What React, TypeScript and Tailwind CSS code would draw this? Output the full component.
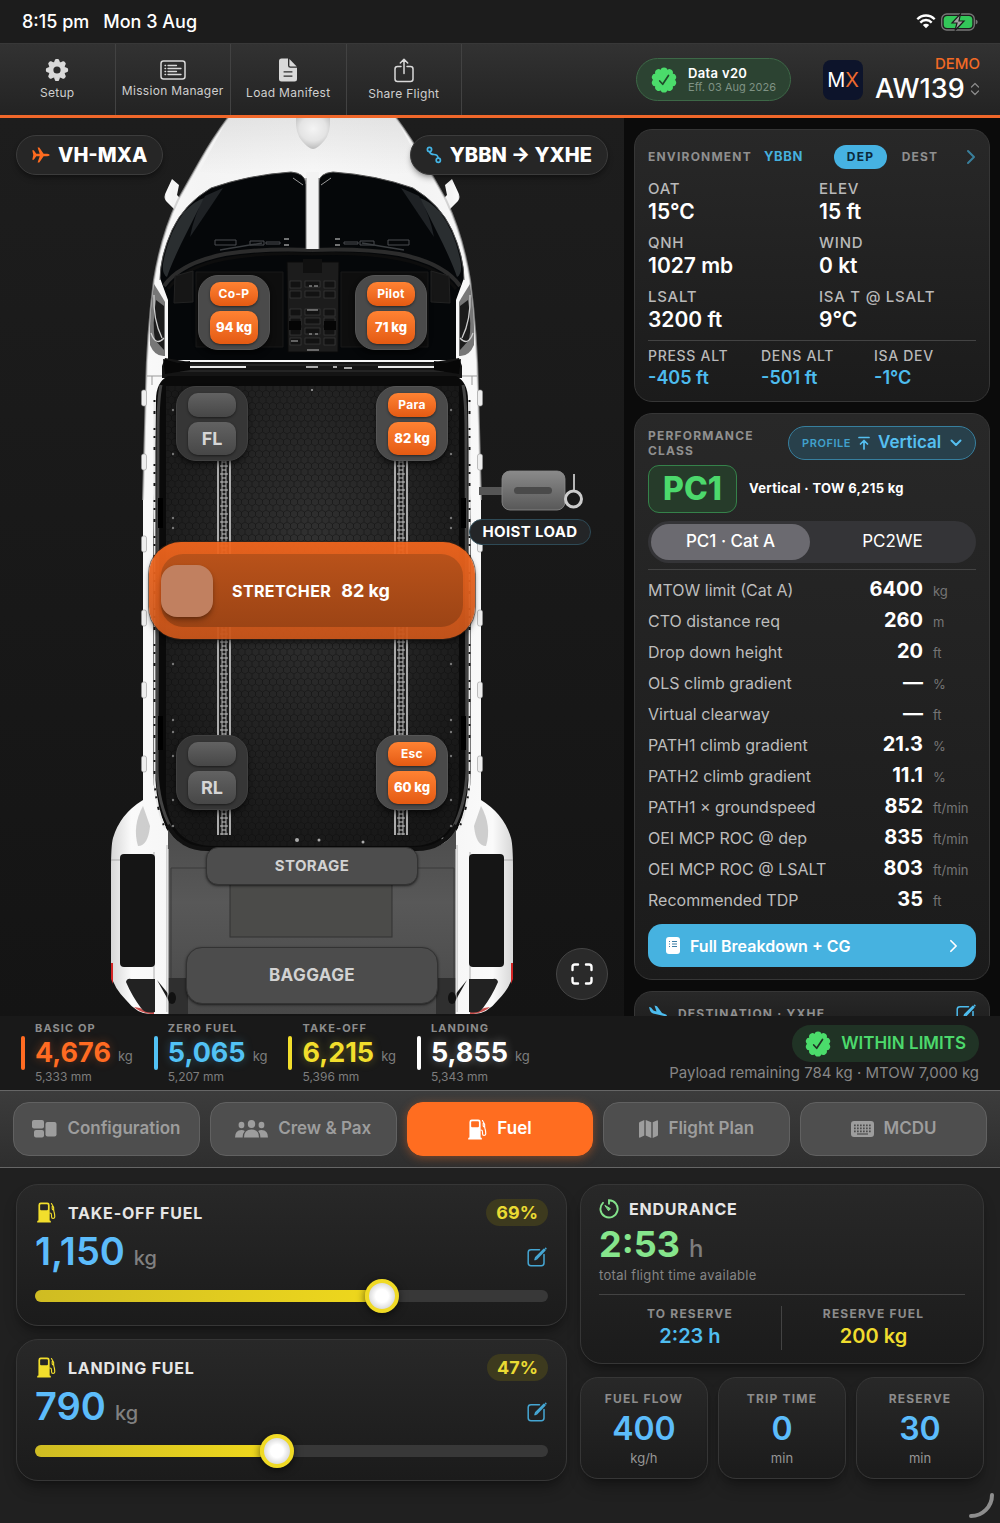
import { useState } from "react";
import type { ReactNode } from "react";

/* ---------- icons ---------- */

function GearIcon() {
  return (
    <svg viewBox="-12 -12 24 24" className="size-6" fill="#d9d9d9" aria-hidden="true">
      <path
        fillRule="evenodd"
        d="M0-8.3a8.3 8.3 0 1 1 0 16.6a8.3 8.3 0 1 1 0-16.6zM0-3.6a3.6 3.6 0 1 0 0 7.2a3.6 3.6 0 1 0 0-7.2z"
      />
      {[0, 45, 90, 135, 180, 225, 270, 315].map((a) => (
        <path key={a} transform={`rotate(${a})`} d="M-3.2-7.2L-2-10.2Q-1.7-11.1-.8-11.1H.8Q1.7-11.1 2-10.2L3.2-7.2z" />
      ))}
    </svg>
  );
}

function MissionIcon() {
  return (
    <svg viewBox="0 0 26 20" className="h-5 w-[26px]" fill="none" stroke="#d9d9d9" aria-hidden="true">
      <rect x="1" y="1" width="24" height="18" rx="2.5" strokeWidth="1.5" />
      <path d="M8 5.5h8.5M8 8.5h13M8 11.5h8.5M8 14.5h13" strokeWidth="1.3" strokeLinecap="round" />
      <path d="M5 5.5h.6M5 8.5h.6M5 11.5h.6M5 14.5h.6" strokeWidth="1.3" strokeLinecap="round" />
    </svg>
  );
}

function DocIcon() {
  return (
    <svg viewBox="0 0 18 24" className="h-6 w-[18px]" fill="#d9d9d9" aria-hidden="true">
      <path
        fillRule="evenodd"
        d="M2.5.5H9V7.5Q9 9.8 11.3 9.8H18V21Q18 23.5 15.5 23.5H2.5Q0 23.5 0 21V3Q0 .5 2.5.5zM4.6 13.3v1.3h8.8v-1.3zM4.6 17.5v1.3h8.8v-1.3z"
      />
      <path d="M10.4.9L17.7 8.4H11.6Q10.4 8.4 10.4 7.2z" />
    </svg>
  );
}

function ShareIcon() {
  return (
    <svg viewBox="0 0 20 25" className="h-[25px] w-5" fill="none" stroke="#d9d9d9" strokeWidth="1.5" strokeLinecap="round" strokeLinejoin="round" aria-hidden="true">
      <path d="M7 8.5H3.500Q1 8.500 1 11V21Q1 23.500 3.500 23.500H16.500Q19 23.500 19 21V11Q19 8.500 16.500 8.500H13M10 15.500V1.500M6.300 5L10 1.300L13.700 5" />
    </svg>
  );
}

function SealIcon({ check }: { check: string }) {
  return (
    <svg viewBox="-13 -13 26 26" className="size-[26px] shrink-0" fill="#4bdc6b" aria-hidden="true">
      <circle r="10.8" />
      {[0, 36, 72, 108, 144, 180, 216, 252, 288, 324].map((a) => (
        <circle key={a} r="3.4" cy="-9.2" transform={`rotate(${a})`} />
      ))}
      <path d="M-4.300 1L-1.300 4.300L4.500-4.500" fill="none" stroke={check} strokeWidth="1.700" strokeLinecap="round" strokeLinejoin="round" />
    </svg>
  );
}

function WifiIcon() {
  return (
    <svg viewBox="0 0 20 15" className="h-[15px] w-5" fill="none" stroke="#fff" strokeWidth="2.300" aria-hidden="true">
      <path d="M1.300 5.300Q5 1.500 10 1.500T18.700 5.300" />
      <path d="M4.300 8.600Q6.700 6 10 6T15.700 8.600" />
      <path d="M10 14.300L6.800 11.100Q8.200 9.700 10 9.700T13.200 11.100z" fill="#fff" stroke="none" />
    </svg>
  );
}

function BatteryIcon() {
  return (
    <svg viewBox="0 0 37 18" className="h-[18px] w-[37px]" aria-hidden="true">
      <rect x=".7" y="1" width="32.600" height="16" rx="5" fill="none" stroke="#777" strokeWidth="1.300" />
      <path d="M34.700 6.500q2 .8 2 2.500t-2 2.500z" fill="#777" />
      <rect x="2.700" y="3" width="28.600" height="12" rx="3.500" fill="#33c759" />
      <path d="M19.500.8L11 10h5L14 17.500L23 8h-5z" fill="#a3a3a3" stroke="#1c1c1c" strokeWidth="1.200" />
    </svg>
  );
}

function PlaneIcon() {
  return (
    <svg viewBox="0 0 18 16" className="h-4 w-[18px]" fill="#ff6b1f" aria-hidden="true">
      <path d="M.3 3.300H1.800L4.300 6.700H7.700L5.600.4H7.300L11.600 6.700H15.200Q17.700 7 17.700 8T15.200 9.300H11.600L7.300 15.600H5.600L7.700 9.300H4.300L1.800 12.700H.3L1.300 8z" />
    </svg>
  );
}

function RouteIcon() {
  return (
    <svg viewBox="0 0 16 18" className="h-[18px] w-4" fill="none" stroke="#44b5e6" strokeWidth="1.700" aria-hidden="true">
      <circle cx="3.500" cy="3.500" r="2.100" />
      <circle cx="12.300" cy="14.300" r="2.100" />
      <path d="M3.600 5.800Q4.300 8.500 8 8.500T12.200 12" />
    </svg>
  );
}

function ChevronIcon({ className }: { className: string }) {
  return (
    <svg viewBox="0 0 10 16" className={className} fill="none" stroke="currentColor" strokeWidth="2" strokeLinecap="round" strokeLinejoin="round" aria-hidden="true">
      <path d="M2 2L8 8L2 14" />
    </svg>
  );
}

function ConfigIcon() {
  return (
    <svg viewBox="0 0 25 18" className="h-[18px] w-[25px]" fill="currentColor" aria-hidden="true">
      <rect x="0" y="0" width="12" height="8.500" rx="2" />
      <rect x="2" y="10" width="10" height="7.500" rx="2" />
      <rect x="13.500" y="2" width="11" height="14.500" rx="2" />
    </svg>
  );
}

function CrewIcon() {
  return (
    <svg viewBox="0 0 33 18" className="h-[18px] w-[33px]" fill="currentColor" aria-hidden="true">
      <ellipse cx="16.500" cy="4" rx="3.700" ry="4" />
      <path d="M9 17.500Q9 9.600 16.500 9.600T24 17.500z" />
      <ellipse cx="6.500" cy="5" rx="2.900" ry="3.300" />
      <ellipse cx="26.500" cy="5" rx="2.900" ry="3.300" />
      <path d="M0 17.500Q0 9.900 6.500 9.900Q8.500 9.900 9.800 10.900Q7.500 13.500 7.700 17.500zM33 17.500Q33 9.900 26.500 9.900Q24.500 9.900 23.200 10.900Q25.500 13.500 25.300 17.500z" />
    </svg>
  );
}

function PumpIcon({ className }: { className: string }) {
  return (
    <svg viewBox="0 0 20 22" className={className} fill="currentColor" aria-hidden="true">
      <path
        fillRule="evenodd"
        d="M1.500 3Q1.500.5 4 .5H10.800Q13.300.5 13.300 3V19.300Q14.600 19.300 14.600 20.600V21.500H.2V20.600Q.2 19.300 1.500 19.300zM4.300 2.200Q3.300 2.200 3.300 3.200V7.500Q3.300 8.500 4.300 8.500H10.500Q11.500 8.500 11.500 7.500V3.200Q11.500 2.200 10.500 2.200z"
      />
      <path d="M13.500 11.500Q15.300 11.500 15.300 13.500V15.600Q15.300 17.300 16.900 17.300T18.700 15.600Q18.700 12.800 18 10.500Q17.300 8 17.500 5.500L15.200 1.600M16 4.500V7Q16 8 17.300 8.300" fill="none" stroke="currentColor" strokeWidth="1.200" strokeLinecap="round" />
    </svg>
  );
}

function MapIcon() {
  return (
    <svg viewBox="0 0 19 18" className="h-[18px] w-[19px]" fill="currentColor" aria-hidden="true">
      <path d="M0 3.200Q0 2.300.8 1.900L5.300 0V15.600L1.200 17.600Q0 18 0 16.800zM6.700 0L12.300 2.300V18L6.700 15.600zM13.700 2.300L17.800.4Q19 0 19 1.200V14.800Q19 15.700 18.200 16.100L13.700 18z" />
    </svg>
  );
}

function KeyboardIcon() {
  return (
    <svg viewBox="0 0 23 16" className="h-4 w-[23px]" aria-hidden="true">
      <rect width="23" height="16" rx="3" fill="currentColor" />
      <path d="M3 4.300h17.500M3 7.300h17.500" stroke="#4c4c4c" strokeWidth="1.700" strokeDasharray="1.700 1.300" />
      <path d="M3 10.300h17.500" stroke="#4c4c4c" strokeWidth="1.700" strokeDasharray="1.700 1.300" />
      <path d="M6 13h11" stroke="#4c4c4c" strokeWidth="1.200" />
    </svg>
  );
}

function EditIcon() {
  return (
    <svg viewBox="0 0 20 20" className="size-5" fill="none" stroke="currentColor" strokeWidth="1.500" strokeLinecap="round" strokeLinejoin="round" aria-hidden="true">
      <path d="M12.500 2.800H4Q1.200 2.800 1.200 5.500V16Q1.200 18.700 4 18.700H14.300Q17 18.700 17 16V7.500" />
      <path d="M8 12.700L8.700 10.600L17 2.300L17.900 3.300L9.800 11.800zM18.600 1.300l.3.300" />
    </svg>
  );
}

function TimerIcon() {
  return (
    <svg viewBox="0 0 20 20" className="size-5" fill="none" stroke="#83e28a" strokeWidth="1.900" strokeLinecap="round" aria-hidden="true">
      <path d="M10 4.700V1.300A8.600 8.600 0 1 1 4 3.800" />
      <path d="M6.200 6.600L11.400 9.700L9.800 11.500z" fill="#83e28a" strokeWidth="1" strokeLinejoin="round" />
    </svg>
  );
}

/* ---------- top bars ---------- */

function ToolButton({ icon, label }: { icon: ReactNode; label: string }) {
  return (
    <button className="flex flex-col items-center justify-center gap-[3px] border-r border-[#424242] text-xs leading-4 tracking-wide whitespace-nowrap text-[#cfcfcf]">
      {icon}
      {label}
    </button>
  );
}

function StatusBar() {
  return (
    <div className="flex h-[43px] items-center justify-between bg-[#1c1c1c] px-[22px] text-lg font-medium text-white">
      <div className="flex gap-[14px]">
        <span>8:15 pm</span>
        <span>Mon 3 Aug</span>
      </div>
      <div className="flex items-center gap-[5px]">
        <WifiIcon />
        <BatteryIcon />
      </div>
    </div>
  );
}

function Header() {
  return (
    <header className="flex h-[75px] justify-between border-t border-b-3 border-t-[#383838] border-b-[#f0672a] bg-linear-to-b from-[#323232] to-[#232323]">
      <nav className="grid w-[462px] grid-cols-4">
        <ToolButton icon={<GearIcon />} label="Setup" />
        <ToolButton icon={<MissionIcon />} label="Mission Manager" />
        <ToolButton icon={<DocIcon />} label="Load Manifest" />
        <ToolButton icon={<ShareIcon />} label="Share Flight" />
      </nav>
      <div className="flex items-center pr-5">
        <button className="flex h-[43px] items-center gap-[11px] rounded-full border border-[#3d6847] bg-[#2c4332] pr-[14px] pl-[14px] text-left">
          <SealIcon check="#1f4a2a" />
          <span className="flex flex-col">
            <span className="text-[13px] leading-4 font-semibold tracking-wide text-white">Data v20</span>
            <span className="text-[11px] leading-[13px] text-[#7f9284]">Eff. 03 Aug 2026</span>
          </span>
        </button>
        <div className="ml-8 flex size-10 items-center justify-center rounded-lg bg-[#0d142b] text-xl text-white">
          <span>
            M<span className="text-[#ee6a2d]">X</span>
          </span>
        </div>
        <div className="ml-3 flex flex-col items-end">
          <span className="text-[15px] leading-[18px] font-medium text-[#f26a25]">DEMO</span>
          <label className="flex items-center gap-[5px]">
            <select aria-label="Aircraft" className="appearance-none bg-transparent text-[27px] leading-8 font-medium text-white">
              <option>AW139</option>
            </select>
            <svg viewBox="0 0 10 14" className="h-[14px] w-[10px]" fill="none" stroke="#8b8b8b" strokeWidth="1.200" strokeLinecap="round" strokeLinejoin="round" aria-hidden="true">
              <path d="M1.500 5L5 1.500L8.500 5M1.500 9L5 12.500L8.500 9" />
            </svg>
          </label>
        </div>
      </div>
    </header>
  );
}

/* ---------- aircraft plan ---------- */

function HalfAirframe() {
  return (
    <g>
      {/* mirror */}
      <path d="M172 179L179 185L177 195L183 201L176 211L166 201Q163 197 166 192z" fill="url(#shell)" />
      {/* nose and side shell */}
      <path d="M313 118H228Q213 138 200 161L178 200Q161 236 154 280Q147 335 146 390L143 500V800Q120 814 113 838Q111 845 111 870V975Q114 988 126 1000Q137 1014 150 1014H313z" fill="url(#shell)" />
      <path d="M228 118Q213 138 200 161L178 200Q161 236 154 280Q147 335 146 390L143 500" fill="none" stroke="#bdbdbd" strokeWidth="2" opacity=".6" />
      <path d="M150 1014Q139 1012 134 1007L140 1008Q146 1012 154 1012V1014z" fill="#c9504e" />
      <path d="M111 963H113V984L111 979z" fill="#d42525" />
      {[398, 462, 544, 618, 690, 764].map((y) => (
        <rect key={y} x="141.500" y={y - 8} width="5" height="16" rx="2" fill="#eee" stroke="#999" strokeWidth=".6" />
      ))}
      <path d="M143 806Q132 826 138 846Q148 846 150 826z" fill="#999" opacity=".45" />
      <path d="M111 860H120M154 852V1012M167 845V1012" stroke="#9c9c9c" strokeWidth=".8" />
      {/* engine intake panels */}
      <rect x="120" y="854" width="35" height="113" rx="4" fill="#151515" />
      <path d="M126 982Q127 978 131 979H155V1012Q145 1014 141 1008Q132 996 126 982z" fill="#222" />
      {/* side window */}
      <path d="M154 284Q149 315 150 345Q155 357 165 356V302Q161 295 154 284z" fill="#777" />
      <path d="M156 300Q152 325 155 340L164 350V306z" fill="#1b1b1b" />
      <path d="M151 333Q156 347 164 338M154 295Q153 320 162 338" stroke="#ccc" strokeWidth="1.300" fill="none" />
      {/* windshield and cockpit */}
      <path d="M306 184Q305 173 291 172Q248 175 211 188Q184 204 172 230Q160 257 160 278L168 300V360H313V249H306z" fill="#050709" />
      <path d="M306 184Q305 173 291 172Q248 175 211 188Q184 204 172 230Q160 257 160 280" fill="none" stroke="#555" strokeWidth="1" />
      <path d="M163 264Q168 234 184 212Q196 200 204 198L181 244Q171 265 167 277Q162 274 163 264z" fill="#8d9398" opacity=".28" />
      <path d="M205 196L223 188Q203 218 190 237Q194 215 205 196z" fill="#454b51" opacity=".4" />
      <path d="M293 178L303 185" stroke="#999" strokeWidth="1" />
      <path d="M164 286Q180 263 225 254Q262 248 313 250" fill="none" stroke="#2c2c2c" strokeWidth="4" />
      <path d="M168 289Q184 267 225 259Q262 252 313 254" fill="none" stroke="#0d0d0d" strokeWidth="3" />
      <path d="M215 240H236V245H215zM250 241H264V245H250zM266 242H280V244H266z" fill="none" stroke="#4a4d50" strokeWidth="1" />
      <path d="M284 239H289M284 245H289" stroke="#ddd" strokeWidth="1" />
      <path d="M220 250Q245 246 262 243" fill="none" stroke="#3a3d40" strokeWidth="1.500" />
      <path d="M175 276L193 271V302L174 303z" fill="#161616" stroke="#222" strokeWidth="1" />
      <path d="M196 272H283V347H196z" fill="#0e0e0e" stroke="#191919" strokeWidth="1" />
      {/* bulkhead */}
      <path d="M165 358L190 362H313V378H162V366z" fill="#141414" />
      <path d="M189 366H246V368H189z" fill="#e8e8e8" />
      <path d="M167 365H313M180 371H313" stroke="#353535" strokeWidth="1" />
      <path d="M163 359L178 363L190 361V370L165 374z" fill="#070707" />
      <path d="M147 376H162M152 376V385" stroke="#999" strokeWidth="1" />
      {/* cabin frame */}
      <path d="M313 376H168Q156 382 156 400L153 540V770Q153 800 166 828Q176 847 205 849H313z" fill="#0a0a0a" />
      <path d="M161 385Q158 400 158 430L157 770Q158 804 171 828" fill="none" stroke="#444" strokeWidth="3" />
      <path d="M154.500 400V780Q156 808 165 828" fill="none" stroke="#e8e8e8" strokeWidth="2" />
      <path d="M154.500 400V780Q156 808 165 828" fill="none" stroke="#161616" strokeWidth="2" strokeDasharray="2 9 3 14 2 6" />
      <rect x="158" y="498" width="5" height="30" fill="#000" />
      <rect x="158" y="716" width="5" height="34" fill="#000" />
    </g>
  );
}

function AircraftPlan() {
  return (
    <svg viewBox="0 118 624 898" className="block h-[898px] w-[624px]" aria-hidden="true">
      <defs>
        <linearGradient id="shell" x1="0" x2="1">
          <stop offset="0" stopColor="#d7d7d7" />
          <stop offset=".1" stopColor="#fafafa" />
          <stop offset=".45" stopColor="#f4f4f4" />
          <stop offset="1" stopColor="#f8f8f8" />
        </linearGradient>
        <linearGradient id="noseShade" x1="0" x2="0" y1="0" y2="1">
          <stop offset="0" stopColor="#9a9a9a" stopOpacity=".2" />
          <stop offset="1" stopColor="#9a9a9a" stopOpacity="0" />
        </linearGradient>
        <radialGradient id="pod" cx=".5" cy=".35" r=".65">
          <stop offset="0" stopColor="#f4f4f4" />
          <stop offset=".6" stopColor="#e4e4e4" />
          <stop offset="1" stopColor="#bcbcbc" />
        </radialGradient>
        <radialGradient id="floor" cx=".5" cy=".4" r=".65">
          <stop offset="0" stopColor="#333" />
          <stop offset="1" stopColor="#171717" />
        </radialGradient>
        <linearGradient id="deck" x1="0" x2="0" y1="0" y2="1">
          <stop offset="0" stopColor="#4c4c4c" />
          <stop offset=".4" stopColor="#585858" />
          <stop offset="1" stopColor="#484848" />
        </linearGradient>
        <pattern id="hex" width="7" height="12" patternUnits="userSpaceOnUse">
          <path d="M0 2L3.500 0L7 2V6L3.500 8L0 6zM3.500 8V12" fill="none" stroke="#0b0b0b" strokeWidth="1" opacity=".45" />
        </pattern>
        <pattern id="rail" width="14" height="8" patternUnits="userSpaceOnUse" x="217">
          <rect width="14" height="8" fill="#1c1c1c" />
          <path d="M1 0V8M13 0V8" stroke="#dcdcdc" strokeWidth="1.500" />
          <path d="M5 0V8M9 0V8" stroke="#b4b4b4" strokeWidth="1" />
          <path d="M3 2H11M5 6H9" stroke="#c4c4c4" strokeWidth="1" />
        </pattern>
        <linearGradient id="hoist" x1="0" x2="0" y1="0" y2="1">
          <stop offset="0" stopColor="#8a8a8a" />
          <stop offset="1" stopColor="#585858" />
        </linearGradient>
      </defs>

      <HalfAirframe />
      <g transform="translate(624 0) scale(-1 1)">
        <HalfAirframe />
      </g>

      {/* nose */}
      <path d="M228 118H396L425 172Q370 176 312 176T199 172z" fill="url(#noseShade)" />
      <path d="M296 118Q295 133 302 141Q309 149 313 149T324 141Q331 133 330 118z" fill="url(#pod)" />
      <rect x="306" y="172" width="13" height="77" fill="#f3f3f3" />
      <path d="M306 178V249M319 178V249" stroke="#777" strokeWidth="1" />

      {/* centre console */}
      <path d="M287 262H339L338 352H288z" fill="#1c1c1c" stroke="#0a0a0a" strokeWidth="1" />
      <rect x="303" y="259" width="19" height="14" fill="#101010" />
      {[281, 291, 309, 318, 328, 338].map((y) => (
        <g key={y} fill="#121212" stroke="#3c3c3c" strokeWidth=".7">
          <rect x="290" y={y} width="11" height="7" />
          <rect x="305" y={y} width="15" height="6" />
          <rect x="324" y={y} width="11" height="7" />
        </g>
      ))}
      <path d="M309 286h3M314 286h4M307 310h11M309 334h3M315 334h3M291 341h7M307 350h12" stroke="#b4b4b4" strokeWidth="1.200" />
      <rect x="289" y="321" width="12" height="9" fill="#050505" />
      <rect x="324" y="321" width="12" height="9" fill="#050505" />
      <path d="M306 367H318M333 367H337M344 368H352" stroke="#ddd" strokeWidth="1.500" />

      {/* cabin floor */}
      <path d="M166 386H459V790Q459 846 410 846H215Q166 846 166 790z" fill="url(#floor)" />
      <path d="M166 386H459V790Q459 846 410 846H215Q166 846 166 790z" fill="url(#hex)" />
      <rect x="217" y="455" width="14" height="380" fill="url(#rail)" />
      <g transform="translate(177 0)">
        <rect x="217" y="455" width="14" height="380" fill="url(#rail)" />
      </g>
      {[410, 454, 518, 528, 664, 720, 732, 756, 800, 826].map((y) => (
        <g key={y} fill="#777">
          <circle cx="173" cy={y} r="1.200" />
          <circle cx="451" cy={y} r="1.200" />
        </g>
      ))}
      <g fill="#aaa">
        <circle cx="297" cy="840" r="2" />
        <circle cx="319" cy="840" r="1.500" />
        <circle cx="363" cy="842" r="1.500" />
        <circle cx="443" cy="839" r="1.500" />
        <circle cx="312" cy="390" r="1" />
      </g>

      {/* aft deck */}
      <path d="M168 828Q178 849 205 849H420Q447 849 456 828V1014H168z" fill="url(#deck)" />
      <path d="M168 825Q180 849 208 849H416Q444 849 456 825" fill="none" stroke="#111" strokeWidth="4" />
      <path d="M171 868H454M171 868V978M454 868V978" stroke="#3b3b3b" strokeWidth="1" fill="none" />
      <rect x="230" y="870" width="162" height="67" fill="#4b4b49" stroke="#333" strokeWidth="1" />
      <path d="M168 978H188V1014H168zM436 978H456V1014H436z" fill="#2f2f2f" />
      <path d="M157 980L170 996V1004L166 996zM467 980L454 996V1004L458 996z" fill="#1a1a1a" />
      <path d="M168 849V1014M456 849V1014" stroke="#f0f0f0" strokeWidth="1" />
      <ellipse cx="172" cy="998" rx="4" ry="6" fill="#111" />
      <ellipse cx="452" cy="998" rx="4" ry="6" fill="#111" />

      {/* rescue hoist */}
      <rect x="479" y="487" width="24" height="8" fill="#555" />
      <rect x="502" y="471" width="63" height="39" rx="8" fill="url(#hoist)" stroke="#8c8c8c" strokeWidth=".8" />
      <rect x="514" y="487" width="38" height="7" rx="3.500" fill="#4a4a4a" />
      <path d="M574 474V491" stroke="#b5b5b5" strokeWidth="2" />
      <circle cx="573.500" cy="499" r="8" fill="none" stroke="#ccc" strokeWidth="3" />
    </svg>
  );
}

type SeatProps = { place: string; name?: string; weight?: string; code?: string };

function Seat({ place, name, weight, code }: SeatProps) {
  const filled = Boolean(weight);
  const tone = filled
    ? "bg-linear-to-b from-[#ff8232] to-[#e45a12] text-white"
    : "bg-linear-to-b from-[#626262] to-[#474747] text-[#d6d6d6]";
  return (
    <button
      aria-label={code ? `Seat ${code}` : undefined}
      className={`absolute ${place} flex h-[75px] w-[72px] flex-col items-center gap-[5px] rounded-[20px] border pt-[6px] shadow-md shadow-black/50 ${filled ? "border-[#555] bg-[#4a4a4a]" : "border-[#404040] bg-[#363636]"}`}
    >
      <span className={`flex h-6 w-12 items-center justify-center rounded-[10px] text-xs font-bold tracking-wide shadow-sm shadow-black/40 ${tone}`}>{name}</span>
      <span className={`flex h-[33px] w-12 items-center justify-center rounded-[10px] whitespace-nowrap shadow-sm shadow-black/40 ${filled ? "text-[13px] font-extrabold" : "text-lg font-bold"} ${tone}`}>
        {weight ?? code}
      </span>
    </button>
  );
}

function CabinView() {
  return (
    <section className="relative flex flex-1 justify-center overflow-hidden bg-linear-to-b from-[#1d1d1d] to-[#141414]">
      <div className="relative shrink-0">
        <AircraftPlan />
        <Seat place="left-[198px] top-[157px]" name="Co-P" weight="94 kg" />
        <Seat place="left-[355px] top-[157px]" name="Pilot" weight="71 kg" />
        <Seat place="left-[176px] top-[268px]" code="FL" />
        <Seat place="left-[376px] top-[268px]" name="Para" weight="82 kg" />
        <Seat place="left-[176px] top-[617px]" code="RL" />
        <Seat place="left-[376px] top-[617px]" name="Esc" weight="60 kg" />

        <button className="absolute top-[424px] left-[149px] flex h-[97px] w-[326px] items-center rounded-[32px] bg-linear-to-b from-[#f0651d]/95 to-[#c9551a]/95 p-[12px] shadow-md ring-1 shadow-black/50 ring-[#3a2418]/60">
          <span className="flex h-full w-full items-center rounded-[22px] bg-linear-to-b from-[#b9521a] to-[#9c4415]">
            <span className="size-[52px] rounded-2xl bg-[#c18060] shadow-md shadow-black/30" />
            <span className="ml-[19px] text-base font-bold tracking-wide text-white">STRETCHER</span>
            <span className="ml-[10px] text-lg font-bold text-white">82 kg</span>
          </span>
        </button>

        <button className="absolute top-[729px] left-[206px] h-[38px] w-[212px] rounded-xl border border-[#333] bg-[#4d4d4d] text-[15px] font-bold tracking-wide text-[#d2d2d2] shadow-sm shadow-black/50">
          STORAGE
        </button>
        <button className="absolute top-[829px] left-[186px] h-[57px] w-[252px] rounded-2xl border border-[#333] bg-[#4c4c4c] text-[17px] font-bold tracking-wide text-[#d2d2d2] shadow-sm shadow-black/50">
          BAGGAGE
        </button>
        <button className="absolute top-[401px] left-[469px] h-[26px] w-[122px] rounded-full border border-[#2e4a56] bg-[#232527] text-[15px] leading-6 font-bold tracking-wide whitespace-nowrap text-white">
          HOIST LOAD
        </button>
      </div>

      <button className="absolute top-[17px] left-4 flex h-10 items-center gap-2 rounded-full border border-[#3c3c3c] bg-[#262626] px-[15px] text-xl font-extrabold text-white shadow-md shadow-black/30">
        <PlaneIcon />
        VH-MXA
      </button>
      <button className="absolute top-[17px] right-4 flex h-10 items-center gap-2 rounded-full border border-[#3c3c3c] bg-[#262626] px-[15px] text-xl font-extrabold text-white shadow-md shadow-black/30">
        <RouteIcon />
        YBBN → YXHE
      </button>
      <button aria-label="Full screen" className="absolute right-4 bottom-4 flex size-[52px] items-center justify-center rounded-full border border-[#454545] bg-[#2a2a2a]">
        <svg viewBox="0 0 22 22" className="size-[22px]" fill="none" stroke="#fff" strokeWidth="2.400" strokeLinecap="round" strokeLinejoin="round" aria-hidden="true">
          <path d="M1.500 7V4Q1.500 1.500 4 1.500H7M15 1.500H18Q20.500 1.500 20.500 4V7M20.500 15V18Q20.500 20.500 18 20.500H15M7 20.500H4Q1.500 20.500 1.500 18V15" />
        </svg>
      </button>
    </section>
  );
}

/* ---------- side column ---------- */

const card = "border border-[#363636] bg-linear-to-b from-[#282828] to-[#1b1b1b]";

const environment = [
  ["OAT", "15°C"],
  ["ELEV", "15 ft"],
  ["QNH", "1027 mb"],
  ["WIND", "0 kt"],
  ["LSALT", "3200 ft"],
  ["ISA T @ LSALT", "9°C"],
];

const derived = [
  ["PRESS ALT", "-405 ft"],
  ["DENS ALT", "-501 ft"],
  ["ISA DEV", "-1°C"],
];

const performance = [
  ["MTOW limit (Cat A)", "6400", "kg"],
  ["CTO distance req", "260", "m"],
  ["Drop down height", "20", "ft"],
  ["OLS climb gradient", "—", "%"],
  ["Virtual clearway", "—", "ft"],
  ["PATH1 climb gradient", "21.3", "%"],
  ["PATH2 climb gradient", "11.1", "%"],
  ["PATH1 × groundspeed", "852", "ft/min"],
  ["OEI MCP ROC @ dep", "835", "ft/min"],
  ["OEI MCP ROC @ LSALT", "803", "ft/min"],
  ["Recommended TDP", "35", "ft"],
];

function EnvironmentCard() {
  return (
    <section className={`rounded-[18px] px-[13px] pt-[15px] pb-[11px] ${card}`}>
      <div className="flex h-6 items-center text-xs font-bold tracking-widest">
        <h2 className="text-[#8f8f8f]">ENVIRONMENT</h2>
        <span className="ml-3 text-[13px] tracking-wider text-[#45b0de]">YBBN</span>
        <div className="ml-auto flex">
          <button className="h-6 w-[53px] rounded-full bg-[#46b2e2] text-[#0c2a3a]">DEP</button>
          <button className="h-6 w-[66px] text-[#8f8f8f]">DEST</button>
        </div>
        <button aria-label="Next" className="ml-[13px] text-[#397f9b]">
          <ChevronIcon className="h-4 w-[10px]" />
        </button>
      </div>
      <dl className="mt-[9px] grid grid-cols-[171px_1fr] gap-y-2">
        {environment.map(([k, v]) => (
          <div key={k}>
            <dt className="text-[15px] leading-[22px] font-medium tracking-wider text-[#b9b9b9]">{k}</dt>
            <dd className="text-[21px] leading-6 font-semibold text-white">{v}</dd>
          </div>
        ))}
      </dl>
      <dl className="mt-2 grid grid-cols-[113px_113px_1fr] border-t border-[#434343] pt-[5px]">
        {derived.map(([k, v]) => (
          <div key={k}>
            <dt className="text-sm leading-5 font-medium tracking-wider whitespace-nowrap text-[#b9b9b9]">{k}</dt>
            <dd className="text-lg leading-6 font-semibold text-[#4dbcee]">{v}</dd>
          </div>
        ))}
      </dl>
    </section>
  );
}

function PerformanceCard() {
  return (
    <section className={`rounded-[18px] px-[13px] pt-[12px] pb-[12px] ${card}`}>
      <div className="flex items-center justify-between">
        <h2 className="w-[130px] text-xs leading-[15px] font-bold tracking-widest text-[#8f8f8f]">PERFORMANCE CLASS</h2>
        <label className="flex h-[34px] items-center rounded-full border border-[#377f9e] bg-[#28404b] px-[13px] text-[#55bff0]">
          <span className="text-[11px] font-semibold tracking-wider text-[#41a1cc]">PROFILE</span>
          <svg viewBox="0 0 12 14" className="mr-2 ml-[7px] h-[14px] w-3" fill="none" stroke="currentColor" strokeWidth="1.700" strokeLinecap="round" strokeLinejoin="round" aria-hidden="true">
            <path d="M1 1.500H11M6 13V4.500M2.500 8L6 4.500L9.500 8" />
          </svg>
          <select className="appearance-none bg-transparent text-[17px] font-semibold">
            <option>Vertical</option>
          </select>
          <svg viewBox="0 0 12 8" className="ml-2 h-2 w-3" fill="none" stroke="currentColor" strokeWidth="2" strokeLinecap="round" strokeLinejoin="round" aria-hidden="true">
            <path d="M1.500 1.500L6 6L10.500 1.500" />
          </svg>
        </label>
      </div>
      <div className="mt-[5px] flex items-center gap-3">
        <strong className="flex h-12 w-[89px] items-center justify-center rounded-[11px] border border-[#35824a] bg-[#263b2a] text-[32px] font-extrabold text-[#4cd96c]">
          PC1
        </strong>
        <span className="text-[13px] font-bold tracking-wide text-white">Vertical · TOW 6,215 kg</span>
      </div>
      <div className="mt-2 grid h-[42px] grid-cols-2 rounded-full bg-[#343437] p-[3px] text-[17px] text-white">
        <button aria-pressed="true" className="mr-[2px] rounded-full bg-[#6b6a70] font-medium">
          PC1 · Cat A
        </button>
        <button aria-pressed="false" className="rounded-full">
          PC2WE
        </button>
      </div>
      <div className="mt-[6px] border-t border-[#434343] pt-[5px]">
        <table className="w-full">
          <tbody>
            {performance.map(([k, v, u]) => (
              <tr key={k} className="h-[31px] align-baseline">
                <th scope="row" className="px-0 py-[2px] text-left text-base leading-6 font-normal whitespace-nowrap text-[#bdbdbd]">{k}</th>
                <td className="px-0 py-[2px] text-right text-xl leading-6 font-bold text-white">{v}</td>
                <td className="w-[53px] py-[2px] pr-0 pl-[10px] text-[13px] leading-6 whitespace-nowrap text-[#757575]">{u}</td>
              </tr>
            ))}
          </tbody>
        </table>
      </div>
      <button className="mt-2 flex h-[43px] w-full items-center rounded-[14px] bg-[#46b2e0] px-[18px] text-base font-semibold text-white">
        <svg viewBox="0 0 14 17" className="mr-[10px] h-[17px] w-[14px]" aria-hidden="true">
          <rect width="14" height="17" rx="3" fill="#fff" />
          <path d="M3 4.500h1M6 4.500h5M3 7h1M6 7h5M3 9.500h1M6 9.500h5" stroke="#3d7ea6" strokeWidth="1" />
        </svg>
        Full Breakdown + CG
        <ChevronIcon className="ml-auto h-[14px] w-[9px]" />
      </button>
    </section>
  );
}

function DestinationCard() {
  return (
    <section className={`flex items-center rounded-[18px] px-[13px] py-[12px] text-xs font-bold tracking-widest text-[#8f8f8f] ${card}`}>
      <svg viewBox="0 0 20 20" className="mr-[10px] size-5" fill="#4dbcee" aria-hidden="true">
        <path d="M1 3L3 3.500L5.500 6.500L8.500 7.500L6.500 1.500L9 2.200L14 9L18 10.500Q20 12 17.500 12.300L5 9.500Q2.500 8.500 2 6.500zM3 16.500H18V18H3z" />
      </svg>
      <h2>DESTINATION · YXHE</h2>
      <button aria-label="Edit destination" className="ml-auto text-[#4dbcee]">
        <EditIcon />
      </button>
    </section>
  );
}

/* ---------- weight summary ---------- */

const weights = [
  { label: "BASIC OP", value: "4,676", arm: "5,333 mm", text: "text-[#ff6b22] [text-shadow:0_0_10px_rgba(255,107,34,0.35)]", bar: "bg-[#ff6b22]" },
  { label: "ZERO FUEL", value: "5,065", arm: "5,207 mm", text: "text-[#52c2f5] [text-shadow:0_0_10px_rgba(82,194,245,0.35)]", bar: "bg-[#52c2f5]" },
  { label: "TAKE-OFF", value: "6,215", arm: "5,396 mm", text: "text-[#f2de2c] [text-shadow:0_0_10px_rgba(242,222,44,0.35)]", bar: "bg-[#f2de2c]" },
  { label: "LANDING", value: "5,855", arm: "5,343 mm", text: "text-white [text-shadow:0_0_10px_rgba(255,255,255,0.35)]", bar: "bg-white" },
];

function WeightSummary() {
  return (
    <section className="flex justify-between bg-[#191919] pt-[5px] pr-[21px] pb-[6px] pl-[21px]">
      <div className="flex gap-[21px]">
        {weights.map((w) => (
          <div key={w.label}>
            <div className="pl-[14px] text-[11px] leading-[15px] font-bold tracking-widest text-[#8d8d8d]">{w.label}</div>
            <div className="flex h-[34px] items-center">
              <span className={`h-[34px] w-1 rounded-full ${w.bar}`} />
              <span className={`ml-[10px] text-[27px] leading-[34px] font-bold ${w.text}`}>{w.value}</span>
              <span className="mt-2 ml-[7px] text-[13px] text-[#7d7d7d]">kg</span>
            </div>
            <div className="pl-[14px] text-xs leading-[14px] text-[#7d7d7d]">{w.arm}</div>
          </div>
        ))}
      </div>
      <div className="flex flex-col items-end pt-1">
        <div className="flex h-[37px] items-center gap-[10px] rounded-full bg-[#203325] px-[13px] text-[17px] font-semibold text-[#4cd96c]">
          <SealIcon check="#203325" />
          WITHIN LIMITS
        </div>
        <p className="mt-[1px] text-[15px] leading-5 text-[#868686]">Payload remaining 784 kg · MTOW 7,000 kg</p>
      </div>
    </section>
  );
}

/* ---------- tabs ---------- */

const tabs = [
  { label: "Configuration", icon: <ConfigIcon /> },
  { label: "Crew & Pax", icon: <CrewIcon /> },
  { label: "Fuel", icon: <PumpIcon className="h-[21px] w-[19px]" /> },
  { label: "Flight Plan", icon: <MapIcon /> },
  { label: "MCDU", icon: <KeyboardIcon /> },
];

function Tabs() {
  return (
    <nav className="grid grid-cols-5 gap-[10px] border-y border-[#666] bg-linear-to-b from-[#3c3c3c] to-[#2e2e2e] px-[13px] py-[11px]">
      {tabs.map((t) => (
        <button
          key={t.label}
          aria-current={t.label === "Fuel" ? "page" : undefined}
          className={`flex h-[54px] items-center justify-center gap-[10px] rounded-2xl border text-[17px] font-semibold whitespace-nowrap ${
            t.label === "Fuel"
              ? "border-[#ff6d20] bg-[#ff6d20] text-white shadow-[0_2px_10px_rgba(255,109,32,0.4)]"
              : "border-[#616161] bg-[#4e4e4e] text-[#9d9d9d]"
          }`}
        >
          {t.icon}
          {t.label}
        </button>
      ))}
    </nav>
  );
}

/* ---------- fuel page ---------- */

function FuelCard({ title, kg, start }: { title: string; kg: string; start: number }) {
  const [level, setLevel] = useState(start);
  return (
    <section className={`rounded-[22px] px-[18px] pt-[14px] pb-3 shadow-lg shadow-black/30 ${card}`}>
      <div className="flex h-[27px] items-center">
        <PumpIcon className="ml-[2px] h-[21px] w-[19px] text-[#f2de2c]" />
        <h2 className="ml-3 text-base font-bold tracking-wider text-[#e6e6e6]">{title}</h2>
        <span className="ml-auto rounded-full bg-[#3d3a1e] px-[10px] text-lg leading-[27px] font-bold text-[#eadb33]">{level}%</span>
      </div>
      <div className="flex h-[53px] justify-between">
        <div className="flex items-baseline gap-[9px]">
          <span className="text-[38px] leading-[50px] font-semibold text-[#5cbcfb]">{kg}</span>
          <span className="text-xl font-medium text-[#808080]">kg</span>
        </div>
        <button aria-label={`Edit ${title.toLowerCase()}`} className="mt-2 mr-[1px] text-[#45a6d3]">
          <EditIcon />
        </button>
      </div>
      <div className="relative flex h-[34px] items-center">
        <div className="h-3 flex-1 overflow-hidden rounded-full bg-[#383838]">
          <div className="h-full bg-linear-to-r from-[#cfbc22] to-[#f0d91c]" style={{ width: `${level}%` }} />
        </div>
        <input
          type="range"
          aria-label={title}
          min={0}
          max={100}
          value={level}
          onChange={(e) => setLevel(Number(e.target.value))}
          className="absolute inset-0 m-0 w-full appearance-none bg-transparent [&::-webkit-slider-thumb]:size-[34px] [&::-webkit-slider-thumb]:appearance-none [&::-webkit-slider-thumb]:rounded-full [&::-webkit-slider-thumb]:border-4 [&::-webkit-slider-thumb]:border-[#f0da25] [&::-webkit-slider-thumb]:bg-[radial-gradient(circle,#fff_35%,#d8d8d8_75%)] [&::-webkit-slider-thumb]:shadow-[0_2px_8px_rgba(0,0,0,0.6)]"
        />
      </div>
    </section>
  );
}

function EnduranceCard() {
  return (
    <section className={`rounded-[22px] px-[18px] pt-3 pb-[13px] shadow-lg shadow-black/30 ${card}`}>
      <div className="flex h-6 items-center gap-[10px]">
        <TimerIcon />
        <h2 className="text-base font-bold tracking-wider text-[#e6e6e6]">ENDURANCE</h2>
      </div>
      <div className="flex h-[46px] items-baseline gap-[9px]">
        <span className="text-[36px] leading-[46px] font-bold text-[#86e58c]">2:53</span>
        <span className="text-2xl leading-[46px] font-medium text-[#7d7d7d]">h</span>
      </div>
      <p className="text-[13px] leading-4 tracking-wide text-[#858585]">total flight time available</p>
      <dl className="mt-[11px] grid grid-cols-2 border-t border-[#434343] pt-[11px] text-center">
        <div className="border-r border-[#434343]">
          <dt className="text-xs leading-4 font-bold tracking-widest text-[#8c8c8c]">TO RESERVE</dt>
          <dd className="text-xl leading-7 font-semibold text-[#4fbdf0]">2:23 h</dd>
        </div>
        <div>
          <dt className="text-xs leading-4 font-bold tracking-widest text-[#8c8c8c]">RESERVE FUEL</dt>
          <dd className="text-xl leading-7 font-semibold text-[#f0dc2e]">200 kg</dd>
        </div>
      </dl>
    </section>
  );
}

function MiniCard({ label, value, unit }: { label: string; value: string; unit: string }) {
  return (
    <section className={`flex flex-col items-center rounded-[18px] pt-3 pb-3 shadow-lg shadow-black/30 ${card}`}>
      <h3 className="text-xs leading-[18px] font-bold tracking-widest text-[#8c8c8c]">{label}</h3>
      <span className="text-[32px] leading-[42px] font-semibold text-[#5cbcfb]">{value}</span>
      <span className="text-[13px] leading-4 text-[#969696]">{unit}</span>
    </section>
  );
}

export default function App() {
  return (
    <div className="flex min-h-screen flex-col bg-[#202020] font-['Inter',sans-serif]">
      <StatusBar />
      <Header />
      <main className="flex bg-[#0b0b0b]">
        <CabinView />
        <aside className="w-[376px]">
          <div className="flex h-0 min-h-full flex-col gap-[11px] overflow-y-auto px-[10px] pt-[11px] [scrollbar-width:none] *:shrink-0">
            <EnvironmentCard />
            <PerformanceCard />
            <DestinationCard />
          </div>
        </aside>
      </main>
      <WeightSummary />
      <Tabs />
      <div className="relative flex-1 px-4 pt-4 pb-[43px]">
        <div className="grid grid-cols-[15fr_11fr] items-start gap-[13px]">
          <div className="flex flex-col gap-[13px]">
            <FuelCard title="TAKE-OFF FUEL" kg="1,150" start={69} />
            <FuelCard title="LANDING FUEL" kg="790" start={47} />
          </div>
          <div className="flex flex-col gap-[13px]">
            <EnduranceCard />
            <div className="grid grid-cols-3 gap-[10px]">
              <MiniCard label="FUEL FLOW" value="400" unit="kg/h" />
              <MiniCard label="TRIP TIME" value="0" unit="min" />
              <MiniCard label="RESERVE" value="30" unit="min" />
            </div>
          </div>
        </div>
        <svg viewBox="0 0 28 28" className="absolute right-1 bottom-1 size-7" fill="none" stroke="#8e8e8e" strokeWidth="4" strokeLinecap="round" aria-hidden="true">
          <path d="M24 3A21 21 0 0 1 3 24" />
        </svg>
      </div>
    </div>
  );
}
